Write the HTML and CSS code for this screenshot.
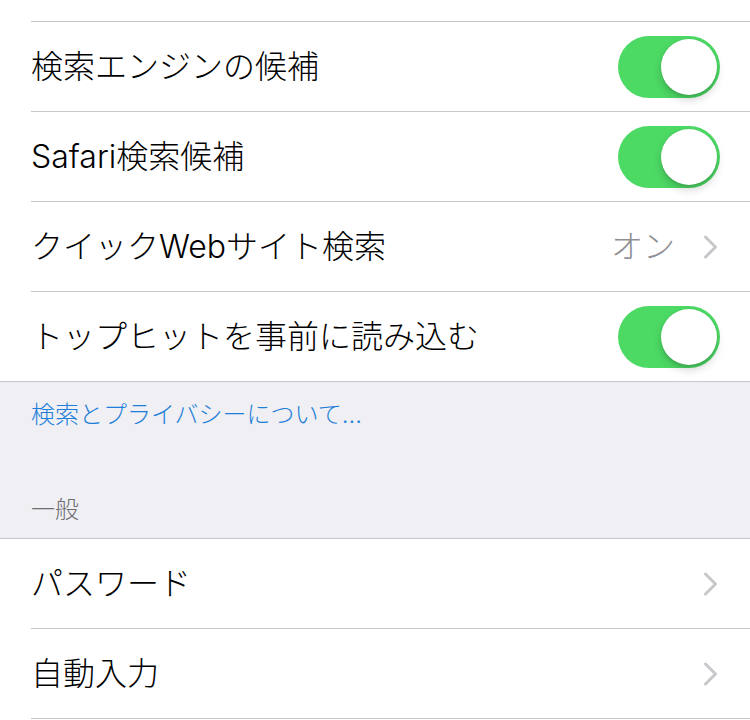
FILE: index.html
```html
<!DOCTYPE html>
<html lang="ja">
<head>
<meta charset="utf-8">
<link rel="stylesheet" href="styles.css">
</head>
<body>
<div class="group group-top">
  <div class="spacer"></div>
  <div class="row sep">
    <span class="label">検索エンジンの候補</span>
    <span class="toggle"><span class="knob"></span></span>
  </div>
  <div class="row sep">
    <span class="label">Safari検索候補</span>
    <span class="toggle"><span class="knob"></span></span>
  </div>
  <div class="row sep">
    <span class="label">クイックWebサイト検索</span>
    <span class="detail">オン</span>
    <svg class="chev" width="15" height="24" viewBox="0 0 15 24"><path d="M2.5 2 L12.5 12 L2.5 22" fill="none" stroke="#c7c7cc" stroke-width="3" stroke-linecap="round" stroke-linejoin="round"/></svg>
  </div>
  <div class="row">
    <span class="label">トップヒットを事前に読み込む</span>
    <span class="toggle"><span class="knob"></span></span>
  </div>
</div>
<div class="footer">
  <div class="link">検索とプライバシーについて...</div>
  <div class="header">一般</div>
</div>
<div class="group group-bottom">
  <div class="row sep">
    <span class="label">パスワード</span>
    <svg class="chev" width="15" height="24" viewBox="0 0 15 24"><path d="M2.5 2 L12.5 12 L2.5 22" fill="none" stroke="#c7c7cc" stroke-width="3" stroke-linecap="round" stroke-linejoin="round"/></svg>
  </div>
  <div class="row sep">
    <span class="label">自動入力</span>
    <svg class="chev" width="15" height="24" viewBox="0 0 15 24"><path d="M2.5 2 L12.5 12 L2.5 22" fill="none" stroke="#c7c7cc" stroke-width="3" stroke-linecap="round" stroke-linejoin="round"/></svg>
  </div>
</div>
</body>
</html>
```

FILE: styles.css
```css
html, body {
  margin: 0;
  padding: 0;
  background: #ffffff;
  font-family: "Inter", "Noto Sans CJK JP", sans-serif;
  color: #000;
}
.group {
  background: #fff;
  border-top: 1px solid #c8c7cc;
  border-bottom: 1px solid #c8c7cc;
}
.group-top {
  border-top: none;
}
.group-bottom {
  border-bottom: none;
}
.spacer {
  height: 21px;
  margin-left: 31px;
  border-bottom: 1px solid #c8c7cc;
}
.row {
  height: 89px;
  display: flex;
  align-items: center;
  padding-left: 31px;
  padding-right: 30px;
  box-sizing: content-box;
  position: relative;
}
.row.sep::after {
  content: "";
  position: absolute;
  left: 31px;
  right: 0;
  bottom: -1px;
  height: 1px;
  background: #c8c7cc;
}
.row.sep {
  margin-bottom: 1px;
}
.label {
  flex: 1;
  font-size: 32px;
  font-weight: 300;
  line-height: 40px;
  white-space: nowrap;
}
.detail {
  font-size: 32px;
  font-weight: 300;
  line-height: 40px;
  color: #8e8e93;
  margin-right: 28px;
}
.chev {
  display: block;
  margin-right: 2px;
}
.toggle {
  width: 102px;
  height: 62px;
  border-radius: 31px;
  background: #4cd964;
  position: relative;
  flex: none;
}
.knob {
  position: absolute;
  top: 3px;
  right: 3px;
  width: 56px;
  height: 56px;
  border-radius: 50%;
  background: #fff;
  box-shadow: 0 0 0 0.5px rgba(0,0,0,0.06), 0 5px 9px rgba(0,0,0,0.17), 0 3px 1px rgba(0,0,0,0.05);
}
.footer {
  background: #efeff4;
  height: 156px;
  padding: 17px 31px 0;
  box-sizing: border-box;
  display: flex;
  flex-direction: column;
}
.link {
  font-size: 24px;
  font-weight: 300;
  line-height: 32px;
  color: #1f7fd8;
}
.header {
  margin-top: 63px;
  font-size: 24px;
  font-weight: 300;
  line-height: 32px;
  color: #6d6d72;
}
```
